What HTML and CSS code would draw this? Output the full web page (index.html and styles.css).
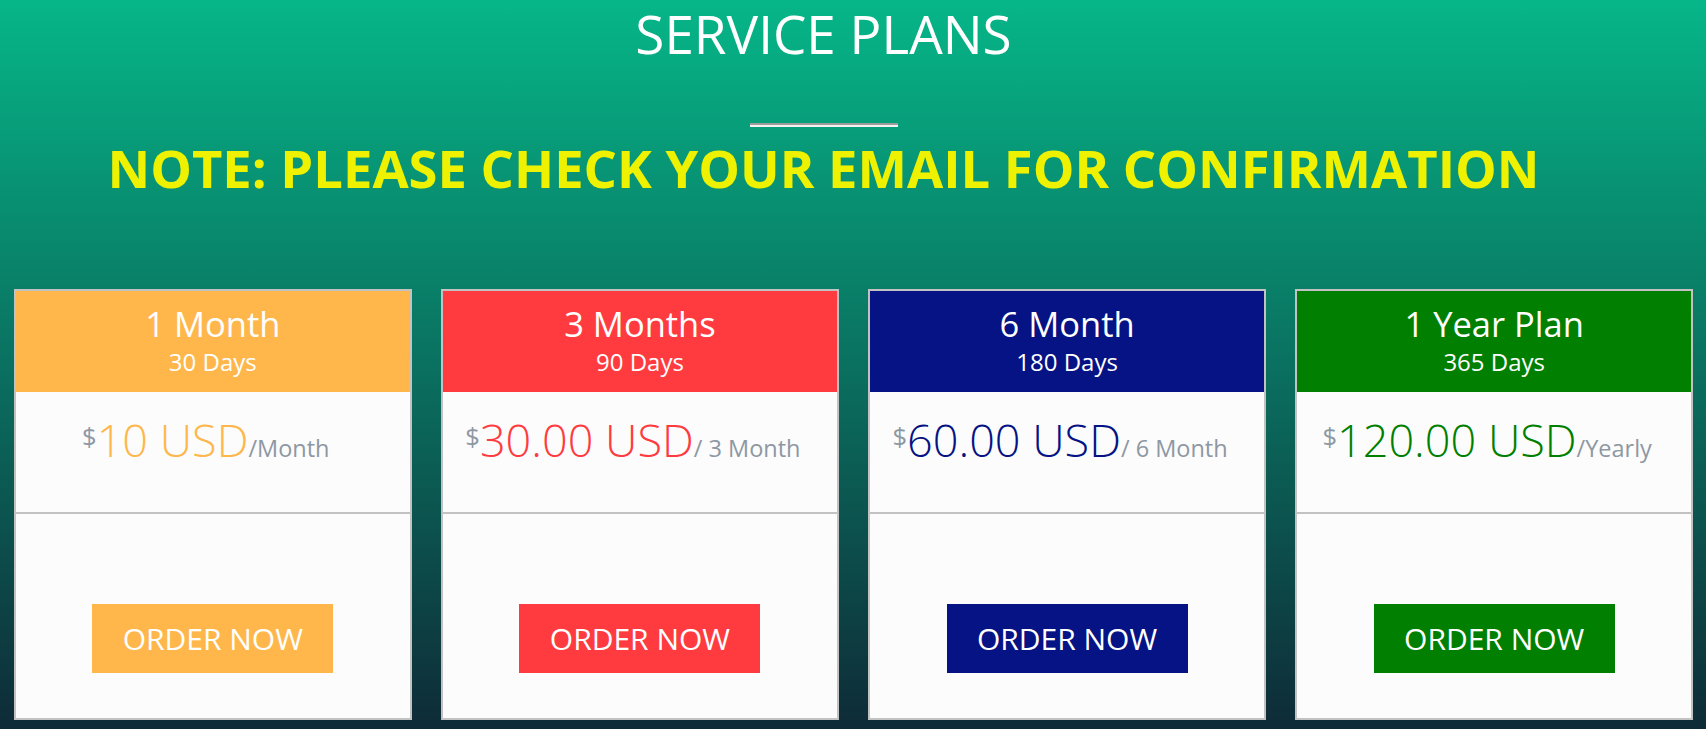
FILE: index.html
```html
<!DOCTYPE html>
<html lang="en">
<head>
<meta charset="utf-8">
<title>Service Plans</title>
<link rel="stylesheet" href="styles.css">
</head>
<body>
<main class="page">
  <header class="intro">
    <h1 class="intro-title">SERVICE PLANS</h1>
    <hr class="intro-rule">
    <h2 class="intro-note">NOTE: PLEASE CHECK YOUR EMAIL FOR CONFIRMATION</h2>
  </header>
  <section class="plans">
    <article class="plan plan-orange">
      <div class="plan-head">
        <div class="plan-name">1 Month</div>
        <div class="plan-days">30 Days</div>
      </div>
      <div class="plan-price">
        <span class="cur">$</span><span class="amount">10 USD</span><span class="per">/Month</span>
      </div>
      <div class="plan-foot">
        <a class="order" href="#">ORDER NOW</a>
      </div>
    </article>
    <article class="plan plan-red">
      <div class="plan-head">
        <div class="plan-name">3 Months</div>
        <div class="plan-days">90 Days</div>
      </div>
      <div class="plan-price">
        <span class="cur">$</span><span class="amount">30.00 USD</span><span class="per">/ 3 Month</span>
      </div>
      <div class="plan-foot">
        <a class="order" href="#">ORDER NOW</a>
      </div>
    </article>
    <article class="plan plan-navy">
      <div class="plan-head">
        <div class="plan-name">6 Month</div>
        <div class="plan-days">180 Days</div>
      </div>
      <div class="plan-price">
        <span class="cur">$</span><span class="amount">60.00 USD</span><span class="per">/ 6 Month</span>
      </div>
      <div class="plan-foot">
        <a class="order" href="#">ORDER NOW</a>
      </div>
    </article>
    <article class="plan plan-green">
      <div class="plan-head">
        <div class="plan-name">1 Year Plan</div>
        <div class="plan-days">365 Days</div>
      </div>
      <div class="plan-price">
        <span class="cur">$</span><span class="amount">120.00 USD</span><span class="per">/Yearly</span>
      </div>
      <div class="plan-foot">
        <a class="order" href="#">ORDER NOW</a>
      </div>
    </article>
  </section>
</main>
</body>
</html>
```

FILE: styles.css
```css
* { box-sizing: border-box; }

html, body {
  margin: 0;
  padding: 0;
  height: 100%;
}

body {
  font-family: "Open Sans", "Noto Sans", sans-serif;
  background: linear-gradient(to bottom, #06b688 0%, #0e2b37 100%);
  background-attachment: fixed;
  min-height: 729px;
  overflow: hidden;
}

.page {
  display: flex;
  flex-direction: column;
}

.intro {
  display: flex;
  flex-direction: column;
  align-items: center;
  padding-right: 59px;
}

.intro-title {
  margin: 4px 0 0;
  font-size: 53px;
  line-height: 60px;
  font-weight: 400;
  color: #fff;
}

.intro-rule {
  width: 148px;
  height: 0;
  margin: 59px 0 0;
  border: 0;
  border-top: 2px solid #9c9c9c;
  border-bottom: 2px solid #f4f4f4;
}

.intro-note {
  margin: 11px 0 0;
  font-size: 52.5px;
  line-height: 60px;
  font-weight: 700;
  color: #eef200;
}

.plans {
  display: grid;
  grid-template-columns: repeat(4, 1fr);
  column-gap: 29.5px;
  padding: 0 13px 0 14px;
  margin-top: 91px;
}

.plan {
  display: flex;
  flex-direction: column;
  border: 2px solid #c2c2c2;
  background: #fcfcfc;
  height: 431px;
}

.plan-head {
  height: 101px;
  padding-top: 13px;
  text-align: center;
  color: #fff;
}

.plan-name {
  font-size: 34.5px;
  line-height: 40px;
}

.plan-days {
  margin-top: 3px;
  font-size: 24px;
  line-height: 30px;
}

.plan-price {
  height: 122px;
  padding: 25px 14px 0 0;
  text-align: center;
  font-size: 45px;
  line-height: 45px;
  border-bottom: 2px solid #c2c2c2;
  white-space: nowrap;
}

.cur {
  font-size: 25.5px;
  line-height: 24px;
  color: #8e98a3;
  vertical-align: 11px;
}

.amount {
  font-weight: 300;
}

.per {
  font-size: 23.5px;
  color: #8e98a3;
}

.plan-foot {
  flex: 1;
  display: flex;
  justify-content: center;
  padding-top: 90px;
}

.order {
  display: block;
  width: 241px;
  height: 69px;
  line-height: 69px;
  text-align: center;
  font-size: 30px;
  color: #fff;
  text-decoration: none;
}

.plan-orange .plan-head, .plan-orange .order { background: #ffb74b; }
.plan-orange .amount { color: #ffb74b; }
.plan-red .plan-head, .plan-red .order { background: #ff3b3f; }
.plan-red .amount { color: #ff3b3f; }
.plan-navy .plan-head, .plan-navy .order { background: #061384; }
.plan-navy .amount { color: #061384; }
.plan-green .plan-head, .plan-green .order { background: #007f00; }
.plan-green .amount { color: #007f00; }
```
